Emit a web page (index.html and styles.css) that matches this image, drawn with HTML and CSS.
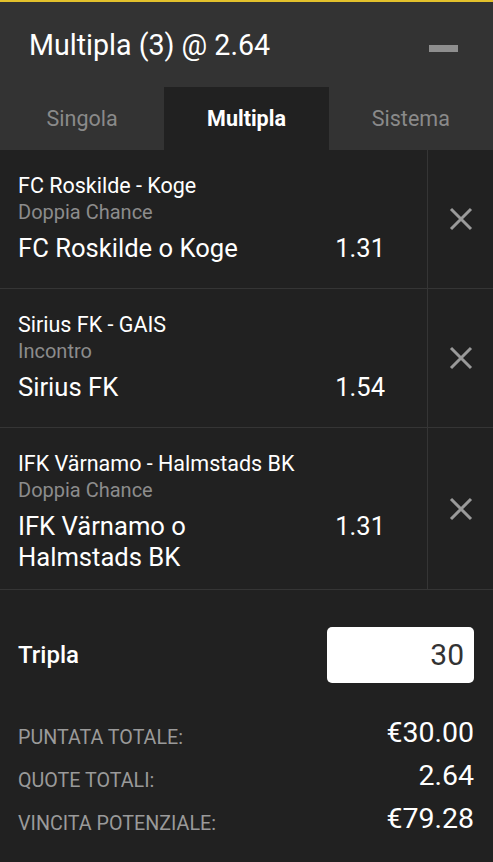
FILE: index.html
```html
<!DOCTYPE html>
<html lang="it">
<head>
<meta charset="utf-8">
<title>Multipla</title>
<link rel="stylesheet" href="styles.css">
</head>
<body>
<div class="slip">
  <header class="slip-head">
    <h1 class="slip-title">Multipla (3) @ 2.64</h1>
    <span class="collapse"></span>
  </header>
  <nav class="tabs">
    <div class="tab">Singola</div>
    <div class="tab active">Multipla</div>
    <div class="tab">Sistema</div>
  </nav>
  <ul class="bets">
    <li class="bet">
      <div class="bet-info">
        <div class="bet-event">FC Roskilde - Koge</div>
        <div class="bet-market">Doppia Chance</div>
        <div class="bet-line"><span class="bet-pick">FC Roskilde o Koge</span><span class="bet-odds">1.31</span></div>
      </div>
      <div class="bet-remove"><svg viewBox="0 0 24 24" width="24" height="24"><path d="M2 2 L22 22 M22 2 L2 22" stroke="#9a9a9a" stroke-width="3" fill="none"/></svg></div>
    </li>
    <li class="bet">
      <div class="bet-info">
        <div class="bet-event">Sirius FK - GAIS</div>
        <div class="bet-market">Incontro</div>
        <div class="bet-line"><span class="bet-pick">Sirius FK</span><span class="bet-odds">1.54</span></div>
      </div>
      <div class="bet-remove"><svg viewBox="0 0 24 24" width="24" height="24"><path d="M2 2 L22 22 M22 2 L2 22" stroke="#9a9a9a" stroke-width="3" fill="none"/></svg></div>
    </li>
    <li class="bet">
      <div class="bet-info">
        <div class="bet-event">IFK Värnamo - Halmstads BK</div>
        <div class="bet-market">Doppia Chance</div>
        <div class="bet-line"><span class="bet-pick">IFK Värnamo o Halmstads BK</span><span class="bet-odds">1.31</span></div>
      </div>
      <div class="bet-remove"><svg viewBox="0 0 24 24" width="24" height="24"><path d="M2 2 L22 22 M22 2 L2 22" stroke="#9a9a9a" stroke-width="3" fill="none"/></svg></div>
    </li>
  </ul>
  <div class="stake">
    <span class="stake-label">Tripla</span>
    <div class="stake-input">30</div>
  </div>
  <dl class="totals">
    <div class="total-row"><dt>PUNTATA TOTALE:</dt><dd>€30.00</dd></div>
    <div class="total-row"><dt>QUOTE TOTALI:</dt><dd>2.64</dd></div>
    <div class="total-row"><dt>VINCITA POTENZIALE:</dt><dd>€79.28</dd></div>
  </dl>
</div>
</body>
</html>
```
FILE: styles.css
```css
* { box-sizing: border-box; }
html, body {
  margin: 0;
  padding: 0;
  background: #212121;
  font-family: Roboto, "Liberation Sans", sans-serif;
  color: #fff;
}
.slip {
  width: 493px;
  min-height: 862px;
  background: #212121;
}
.slip-head {
  height: 87px;
  background: #333333;
  border-top: 2px solid #e3c12c;
  display: flex;
  align-items: center;
  justify-content: space-between;
  padding: 0 35px 0 29px;
}
.slip-title {
  margin: 0;
  font-size: 28.6px;
  line-height: 34px;
  font-weight: 400;
  color: #fff;
}
.collapse {
  display: block;
  width: 29px;
  height: 7px;
  margin-top: 8px;
  background: #8e8e8e;
}
.tabs {
  display: flex;
  height: 63px;
  background: #333333;
}
.tab {
  flex: 1;
  display: flex;
  align-items: center;
  justify-content: center;
  font-size: 21.5px;
  color: #8a8a8a;
}
.tab.active {
  background: #212121;
  color: #fff;
  font-weight: 700;
}
.bets {
  list-style: none;
  margin: 0;
  padding: 0;
}
.bet {
  display: flex;
  min-height: 139px;
  border-bottom: 1px solid #353535;
}
.bet-info {
  flex: 1;
  padding: 23px 0 16px 18px;
}
.bet-event {
  font-size: 21.5px;
  line-height: 26px;
  color: #fff;
}
.bet-market {
  font-size: 20px;
  line-height: 26px;
  color: #8c8c8c;
}
.bet-line {
  display: flex;
  align-items: flex-start;
  margin-top: 8px;
}
.bet-pick {
  width: 250px;
  font-size: 25.6px;
  line-height: 31px;
  font-weight: 400;
}
.bet-odds {
  margin-left: auto;
  margin-right: 42px;
  font-size: 25.5px;
  line-height: 31px;
  font-weight: 400;
}
.bet-remove {
  width: 66px;
  border-left: 1px solid #353535;
  display: flex;
  align-items: center;
  justify-content: center;
}
.stake {
  display: flex;
  align-items: center;
  justify-content: space-between;
  padding: 37px 19px 0 18px;
}
.stake-label {
  font-size: 24px;
  font-weight: 500;
}
.stake-input {
  width: 147px;
  height: 56px;
  background: #fff;
  border-radius: 5px;
  color: #333;
  font-size: 30px;
  line-height: 56px;
  text-align: right;
  padding-right: 10px;
}
.totals {
  margin: 34px 0 0;
  padding: 0 19px 0 18px;
  display: flex;
  flex-direction: column;
  gap: 11px;
}
.total-row {
  display: flex;
  justify-content: space-between;
  align-items: flex-end;
}
.total-row dt {
  font-size: 19.7px;
  line-height: 22px;
  color: #9a9a9a;
}
.total-row dd {
  margin: 0;
  font-size: 28.5px;
  line-height: 32px;
  color: #fff;
}
```
